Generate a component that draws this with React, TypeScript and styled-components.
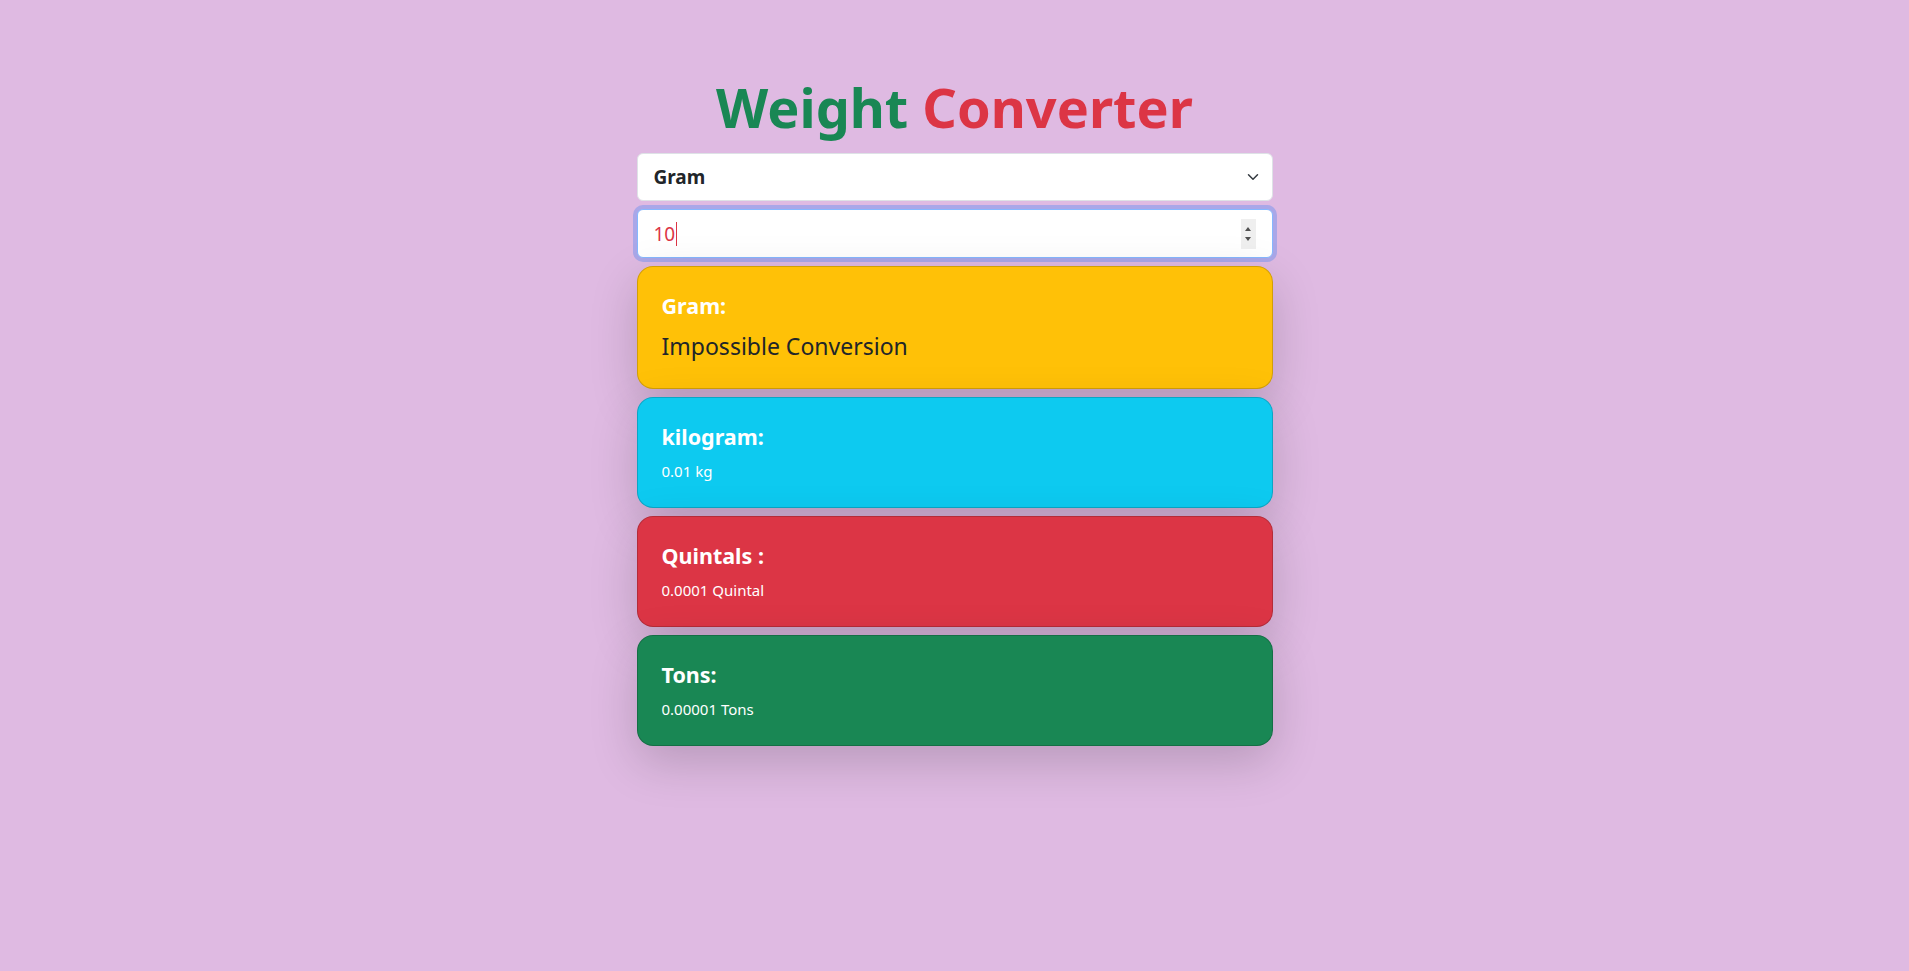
import React from "react";
import styled, { createGlobalStyle } from "styled-components";

const GlobalStyle = createGlobalStyle`
  html, body { margin: 0; padding: 0; }
  body {
    background: #dfbae2;
    font-family: "Noto Sans", "Open Sans", sans-serif;
    color: #212529;
    min-height: 971px;
  }
  *, *::before, *::after { box-sizing: border-box; }
`;

const Page = styled.main`
  display: flex;
  justify-content: center;
  padding-top: 70px;
`;

const Column = styled.div`
  width: 636px;
  display: flex;
  flex-direction: column;
  gap: 8px;
`;

const Title = styled.h1`
  margin: 0;
  text-align: center;
  font-size: 54px;
  font-weight: 700;
  line-height: 75px;
`;

const Word = styled.span<{ $c: string }>`
  color: ${(p) => p.$c};
`;

const SelectWrap = styled.div`
  position: relative;
`;

const UnitSelect = styled.select`
  appearance: none;
  width: 100%;
  height: 48px;
  background: #fff;
  border: 1px solid #dee2e6;
  border-radius: 6px;
  padding: 0 48px 0 16px;
  font-family: inherit;
  font-size: 19px;
  font-weight: 700;
  color: #212529;
  outline: none;
`;

const Chevron = styled.svg`
  position: absolute;
  right: 12px;
  top: 50%;
  width: 16px;
  height: 12px;
  margin-top: -6px;
  pointer-events: none;
`;

const NumberField = styled.div`
  height: 49px;
  background: #fff;
  border: 1px solid #86b7fe;
  border-radius: 6px;
  box-shadow: 0 0 0 4px rgba(13, 110, 253, 0.25);
  padding: 0 16px;
  display: flex;
  align-items: center;
  font-size: 19px;
`;

const ValueText = styled.span`
  color: #dc3545;
`;

const Caret = styled.span`
  width: 1px;
  height: 24px;
  background: #dc3545;
  margin-left: 1px;
`;

const Spacer = styled.span`
  flex: 1;
`;

const Spinner = styled.span`
  width: 15px;
  height: 30px;
  background: #efefef;
  display: flex;
  flex-direction: column;
  align-items: center;
  justify-content: center;
  gap: 6px;
`;

const Tri = styled.span<{ $down?: boolean }>`
  width: 0;
  height: 0;
  border-left: 3.5px solid transparent;
  border-right: 3.5px solid transparent;
  ${(p) =>
    p.$down
      ? "border-top: 4px solid #505050;"
      : "border-bottom: 4px solid #505050;"}
`;

const Card = styled.section<{ $bg: string }>`
  background: ${(p) => p.$bg};
  border: 1px solid rgba(0, 0, 0, 0.175);
  border-radius: 16px;
  padding: 24px;
  box-shadow: 0 16px 48px rgba(0, 0, 0, 0.175);
`;

const CardTitle = styled.h4`
  margin: 0 0 8px;
  font-size: 21.5px;
  font-weight: 700;
  line-height: 29px;
  color: #fff;
`;

const CardValue = styled.p<{ $large?: boolean; $dark?: boolean }>`
  margin: 0;
  font-size: ${(p) => (p.$large ? 23 : 15)}px;
  line-height: ${(p) => (p.$large ? 36 : 24)}px;
  color: ${(p) => (p.$dark ? "#212529" : "#fff")};
`;

const results = [
  { bg: "#ffc107", title: "Gram:", value: "Impossible Conversion", large: true, dark: true },
  { bg: "#0dcaf0", title: "kilogram:", value: "0.01 kg" },
  { bg: "#dc3545", title: "Quintals :", value: "0.0001 Quintal" },
  { bg: "#198754", title: "Tons:", value: "0.00001 Tons" },
];

export default function App() {
  return (
    <>
      <GlobalStyle />
      <Page>
        <Column>
          <Title>
            <Word $c="#198754">Weight</Word> <Word $c="#dc3545">Converter</Word>
          </Title>
          <SelectWrap>
            <UnitSelect defaultValue="gram">
              <option value="gram">Gram</option>
              <option value="kilogram">Kilogram</option>
              <option value="quintal">Quintal</option>
              <option value="ton">Ton</option>
            </UnitSelect>
            <Chevron viewBox="0 0 16 16">
              <path d="m2 5 6 6 6-6" fill="none" stroke="#343a40" strokeWidth="2" strokeLinecap="round" strokeLinejoin="round" />
            </Chevron>
          </SelectWrap>
          <NumberField>
            <ValueText>10</ValueText>
            <Caret />
            <Spacer />
            <Spinner>
              <Tri />
              <Tri $down />
            </Spinner>
          </NumberField>
          {results.map((r) => (
            <Card key={r.title} $bg={r.bg}>
              <CardTitle>{r.title}</CardTitle>
              <CardValue $large={r.large} $dark={r.dark}>
                {r.value}
              </CardValue>
            </Card>
          ))}
        </Column>
      </Page>
    </>
  );
}
